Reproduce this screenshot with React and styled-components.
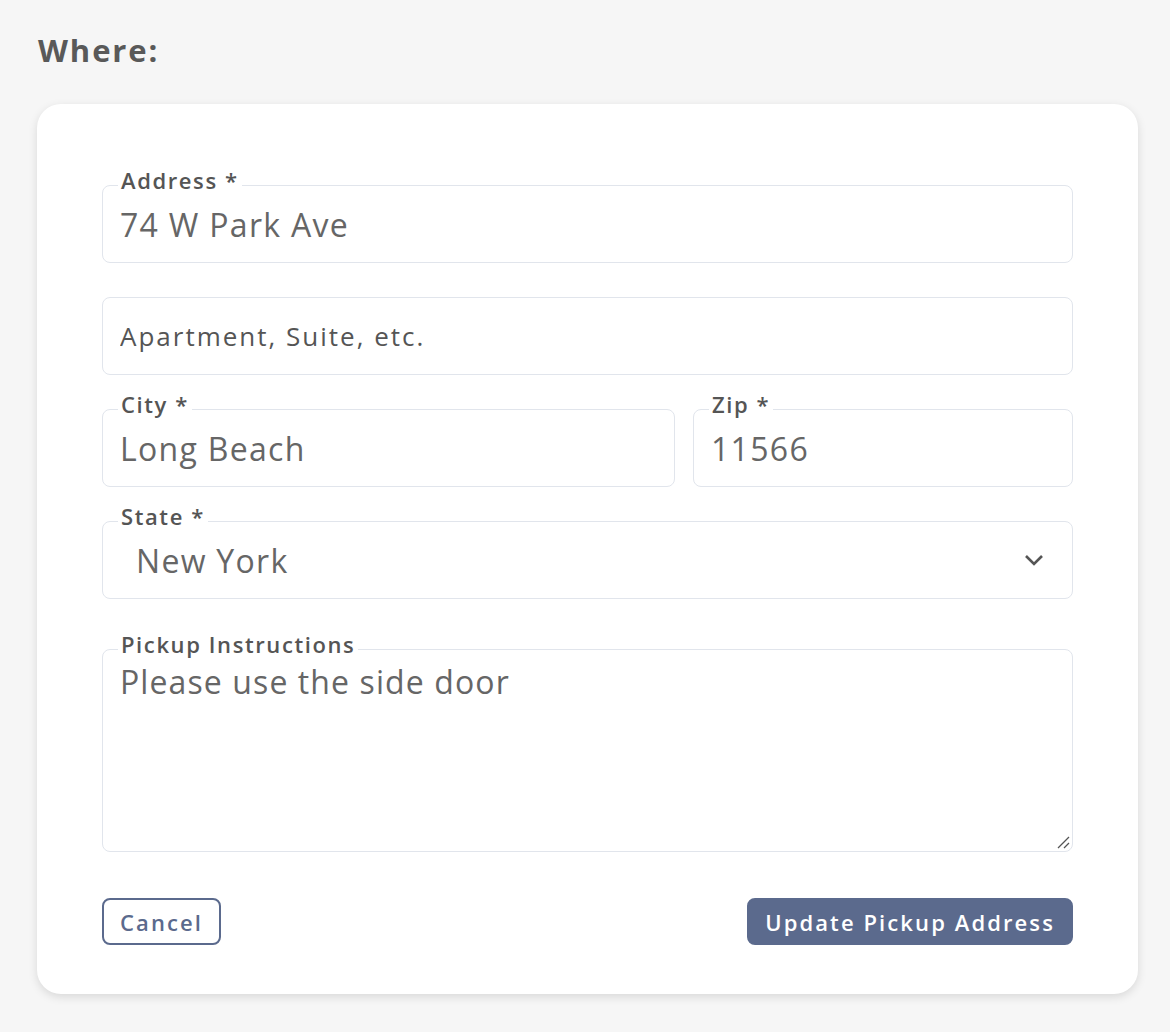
import React from "react";
import styled, { createGlobalStyle } from "styled-components";

const GlobalStyle = createGlobalStyle`
  html, body {
    margin: 0;
    padding: 0;
    background: #f6f6f6;
  }
  body {
    font-family: "Open Sans", "Liberation Sans", sans-serif;
    color: #5c5c5c;
  }
`;

const Page = styled.div`
  padding: 29px 32px 39px 37px;
`;

const Heading = styled.h2`
  margin: 0 0 33px 1px;
  font-size: 31px;
  line-height: 42px;
  font-weight: 700;
  letter-spacing: 1.9px;
  color: #595959;
`;

const Card = styled.form`
  background: #fff;
  border-radius: 24px;
  box-shadow: 0 3px 10px rgba(0, 0, 0, 0.12);
  padding: 81px 65px 49px 65px;
  display: flex;
  flex-direction: column;
  gap: 34px;
`;

const Row = styled.div`
  display: grid;
  grid-template-columns: ${(p) => p.$cols || "1fr"};
  gap: 18px;
`;

const Box = styled.div`
  position: relative;
  height: ${(p) => p.$h || 78}px;
  border: 1px solid #e1e5ec;
  border-radius: 8px;
  box-sizing: border-box;
  display: flex;
  align-items: center;
  margin-top: ${(p) => p.$mt || 0}px;
`;

const Label = styled.span`
  position: absolute;
  left: 15px;
  top: -18px;
  padding: 0 3px;
  background: #fff;
  font-size: 22px;
  line-height: 24px;
  font-weight: 600;
  letter-spacing: 1.6px;
  color: #555;
`;

const Value = styled.input`
  border: none;
  outline: none;
  background: transparent;
  width: 100%;
  padding: 0 0 0 ${(p) => p.$pl || 17}px;
  font-family: inherit;
  font-size: ${(p) => (p.$ph ? 26 : 32)}px;
  font-weight: ${(p) => (p.$ph ? 500 : 400)};
  letter-spacing: ${(p) => (p.$ph ? 2 : 1.3)}px;
  color: #666;
  &::placeholder {
    color: #555;
    opacity: 1;
  }
`;

const SelectText = styled.div`
  flex: 1;
  padding-left: 33px;
  font-size: 32px;
  letter-spacing: 1.3px;
  color: #666;
`;

const Chevron = styled.svg`
  margin-right: 28px;
`;

const Notes = styled.textarea`
  border: none;
  outline: none;
  resize: none;
  width: 100%;
  height: 100%;
  box-sizing: border-box;
  padding: 13px 17px;
  background: transparent;
  font-family: inherit;
  font-size: 32px;
  line-height: 38px;
  letter-spacing: 1.1px;
  color: #666;
`;

const Grip = styled.svg`
  position: absolute;
  right: 2px;
  bottom: 2px;
`;

const Actions = styled.div`
  display: flex;
  justify-content: space-between;
  margin-top: 12px;
`;

const Button = styled.button`
  height: 47px;
  box-sizing: border-box;
  border-radius: 8px;
  padding: 0 16px;
  font-family: inherit;
  font-size: 22px;
  font-weight: 600;
  letter-spacing: 2.1px;
  border: 2px solid #5b6a8d;
  background: ${(p) => (p.$primary ? "#5b6a8d" : "#fff")};
  color: ${(p) => (p.$primary ? "#fff" : "#5b6a8d")};
  cursor: pointer;
`;

export default function App() {
  return (
    <>
      <GlobalStyle />
      <Page>
        <Heading>Where:</Heading>
        <Card onSubmit={(e) => e.preventDefault()}>
          <Box>
            <Label>Address *</Label>
            <Value defaultValue="74 W Park Ave" />
          </Box>
          <Box>
            <Value $ph placeholder="Apartment, Suite, etc." />
          </Box>
          <Row $cols="573px 1fr">
            <Box>
              <Label>City *</Label>
              <Value defaultValue="Long Beach" />
            </Box>
            <Box>
              <Label>Zip *</Label>
              <Value defaultValue="11566" />
            </Box>
          </Row>
          <Box>
            <Label>State *</Label>
            <SelectText>New York</SelectText>
            <Chevron width="20" height="12" viewBox="0 0 20 12">
              <path d="M2 2l8 8 8-8" fill="none" stroke="#555" strokeWidth="2.6" />
            </Chevron>
          </Box>
          <Box $h={203} $mt={16}>
            <Label>Pickup Instructions</Label>
            <Notes defaultValue="Please use the side door" />
            <Grip width="14" height="14" viewBox="0 0 14 14">
              <path d="M2 13L13 2M8 13l5-5" stroke="#555" strokeWidth="1.3" />
            </Grip>
          </Box>
          <Actions>
            <Button type="button">Cancel</Button>
            <Button type="submit" $primary>
              Update Pickup Address
            </Button>
          </Actions>
        </Card>
      </Page>
    </>
  );
}
